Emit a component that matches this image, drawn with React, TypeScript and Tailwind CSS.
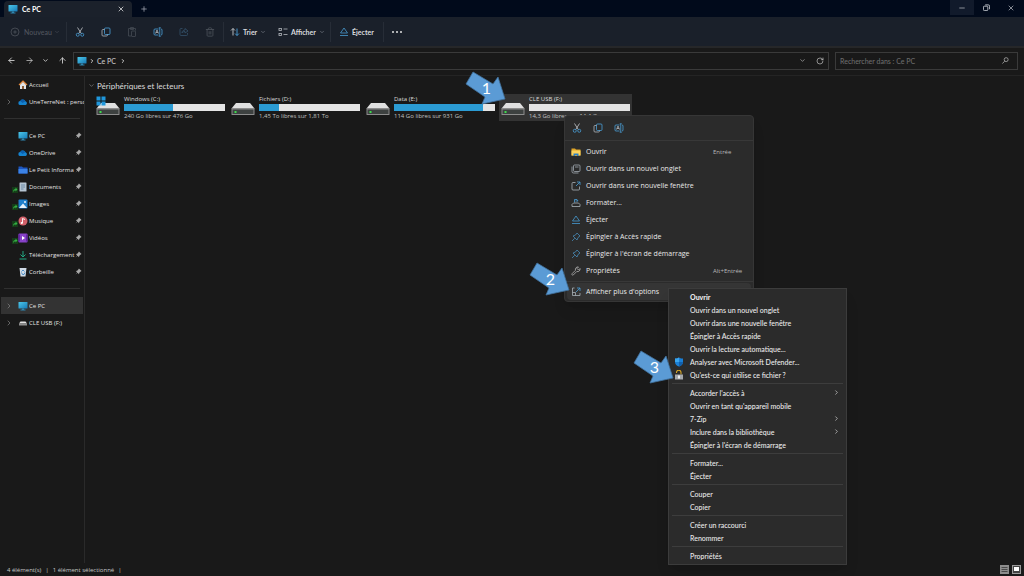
import React from 'react';
import { ArrowLeft, ArrowRight, ArrowUp, ChevronDown, ChevronRight, Minus, Plus, RotateCw, Trash2, X } from 'lucide-react';

interface SideItem {
  label: string;
  icon: React.ReactNode;
  pinned?: boolean;
  expandable?: boolean;
  synced?: boolean;
  active?: boolean;
}

interface Drive {
  name: string;
  info: string;
  used: number;
  system?: boolean;
  selected?: boolean;
}

interface MenuItem {
  label: string;
  icon?: React.ReactNode;
  shortcut?: string;
  bold?: boolean;
  submenu?: boolean;
}

const svg = 'size-[10px] shrink-0';

const PcIcon = () => (
  <svg viewBox="0 0 20 20" className={svg}>
    <defs>
      <linearGradient id="pc" x1="0" y1="0" x2="1" y2="1">
        <stop offset="0" stopColor="#4cc8ea" />
        <stop offset="1" stopColor="#1678b4" />
      </linearGradient>
    </defs>
    <rect x="1" y="2" width="18" height="13" rx="1" fill="url(#pc)" />
    <path d="M8 15h4v2h3v2H5v-2h3z" fill="#2f86b0" />
  </svg>
);

const HomeIcon = () => (
  <svg viewBox="0 0 20 20" className={svg}>
    <path d="M4 9l6-6 6 6v9h-4v-6H8v6H4z" fill="#dfe3e8" />
    <path d="M2 10l8-8 8 8" fill="none" stroke="#e0873c" strokeWidth="2.4" />
    <path d="M8 12h4v6H8z" fill="#8a5a34" />
  </svg>
);

const CloudIcon = () => (
  <svg viewBox="0 0 20 20" className={svg}>
    <path d="M5 16a4 4 0 0 1-.6-8A6 6 0 0 1 15 8.500a4 4 0 0 1 .5 7.500z" fill="#1583d0" />
    <path d="M4.400 8A6 6 0 0 1 15 8.500L9 12z" fill="#0b5fae" />
  </svg>
);

const FolderBlueIcon = () => (
  <svg viewBox="0 0 20 20" className={svg}>
    <path d="M1 3h7l2 2h9v12H1z" fill="#1d56c0" />
    <path d="M1 8h18v9H1z" fill="#3b82e6" />
  </svg>
);

const DocIcon = () => (
  <svg viewBox="0 0 20 20" className={svg}>
    <rect x="3" y="1" width="14" height="18" rx="1" fill="#b5c4d2" />
    <path d="M6 6h8M6 10h8M6 14h5" stroke="#5c7f9c" strokeWidth="1.600" />
  </svg>
);

const ImageIcon = () => (
  <svg viewBox="0 0 20 20" className={svg}>
    <rect x="1" y="1" width="18" height="18" rx="2" fill="#1f7fcb" />
    <path d="M2 18l8-9 8 9z" fill="#e6f1fa" />
    <circle cx="14" cy="6" r="2" fill="#e6f1fa" />
  </svg>
);

const MusicIcon = () => (
  <svg viewBox="0 0 20 20" className={svg}>
    <circle cx="10" cy="10" r="9" fill="#d0616a" />
    <path d="M9 14V5l5 2" fill="none" stroke="#fff" strokeWidth="1.800" />
    <circle cx="7.500" cy="14" r="2.200" fill="#fff" />
  </svg>
);

const VideoIcon = () => (
  <svg viewBox="0 0 20 20" className={svg}>
    <rect x="1" y="1" width="18" height="18" rx="2" fill="#8742c8" />
    <path d="M1 3h3v14H1zM16 3h3v14h-3z" fill="#6127a0" />
    <path d="M8 6l6 4-6 4z" fill="#fff" />
  </svg>
);

const DownloadIcon = () => (
  <svg viewBox="0 0 20 20" className={svg}>
    <path d="M10 2v11M5 9l5 5 5-5M3 18h14" fill="none" stroke="#22a884" strokeWidth="2" />
  </svg>
);

const BinIcon = () => (
  <svg viewBox="0 0 20 20" className={svg}>
    <path d="M3 2h14l-2 17H5z" fill="#cfdbe6" />
    <path d="M7 9l3-3 3 3M7 11l2 4h3l2-4" fill="none" stroke="#2a78bd" strokeWidth="1.600" />
  </svg>
);

const UsbIcon = () => (
  <svg viewBox="0 0 20 20" className={svg}>
    <path d="M5 7h10l3 4H2z" fill="#e2e2e2" />
    <path d="M2 11h16v4H2z" fill="#8e8e8e" />
  </svg>
);

const PinIcon = () => (
  <svg viewBox="0 0 16 16" className="size-[7px] shrink-0">
    <path d="M9 1l6 6-2 1-3 3-1 3-3-3-5 4 4-5-3-3 3-1 3-3z" fill="#a8a8a8" />
  </svg>
);

const ShortcutIcon = () => (
  <svg viewBox="0 0 12 12" className="size-[6px] shrink-0">
    <rect width="12" height="12" fill="#153b18" />
    <path d="M2 11c0-5 2-7 5-7V1l4 4-4 4V6.500C5 6.500 3 8 2 11z" fill="#35b044" />
  </svg>
);

const CutIcon = () => (
  <svg viewBox="0 0 20 20" className={svg} fill="none" strokeWidth="1.600">
    <path d="M5 1l7.500 12M15 1L7.500 13" stroke="#c4c8cc" />
    <circle cx="5.500" cy="15.500" r="3" stroke="#4a9fd8" />
    <circle cx="14.500" cy="15.500" r="3" stroke="#4a9fd8" />
  </svg>
);

const CopyIcon = () => (
  <svg viewBox="0 0 20 20" className={svg} fill="none" strokeWidth="1.600">
    <rect x="7" y="2" width="11" height="13" rx="2" stroke="#4a9fd8" />
    <path d="M7 5H4a2 2 0 0 0-2 2v9a2 2 0 0 0 2 2h7a2 2 0 0 0 2-2v-1" stroke="#aeb4ba" />
  </svg>
);

const PasteIcon = () => (
  <svg viewBox="0 0 20 20" className={svg} fill="none" stroke="#454b54" strokeWidth="1.600">
    <path d="M8 18H3V3h14v4M7 1h6v4H7z" />
    <rect x="9" y="8" width="8" height="11" rx="1" />
  </svg>
);

const RenameIcon = () => (
  <svg viewBox="0 0 20 20" className={svg} fill="none" strokeWidth="1.600">
    <path d="M11 4H4a2 2 0 0 0-2 2v8a2 2 0 0 0 2 2h7M16 4a2 2 0 0 1 2 2v8a2 2 0 0 1-2 2" stroke="#4a9fd8" />
    <path d="M5 13l3-7 3 7M6 11h4" stroke="#aeb4ba" />
    <path d="M13.500 2v16M11.500 1.500h4M11.500 18.500h4" stroke="#4a9fd8" />
  </svg>
);

const ShareIcon = () => (
  <svg viewBox="0 0 20 20" className={svg} fill="none" stroke="#34506a" strokeWidth="1.600">
    <path d="M7 3H4a2 2 0 0 0-2 2v10a2 2 0 0 0 2 2h11a2 2 0 0 0 2-2v-3M6 12c0-4 3-6 6-6V3l6 5-6 4V9c-3 0-5 1-6 3z" />
  </svg>
);

const NewIcon = () => (
  <svg viewBox="0 0 20 20" className={svg} fill="none" stroke="#50555e" strokeWidth="1.500">
    <circle cx="10" cy="10" r="8" />
    <path d="M10 6.500v7M6.500 10h7" />
  </svg>
);

const SortIcon = () => (
  <svg viewBox="0 0 20 20" className={svg} fill="none" strokeWidth="1.800">
    <path d="M6 17V3M2 7l4-4 4 4" stroke="#c4c8cc" />
    <path d="M14 3v14M10 13l4 4 4-4" stroke="#4a9fd8" />
  </svg>
);

const ViewIcon = () => (
  <svg viewBox="0 0 20 20" className={svg} fill="none" stroke="#b4b8be" strokeWidth="1.600">
    <rect x="2" y="3" width="5" height="4" />
    <rect x="2" y="13" width="5" height="4" />
    <path d="M11 4h8M11 15h8" />
  </svg>
);

const EjectIcon = () => (
  <svg viewBox="0 0 20 20" className={svg} fill="none" stroke="#4593c8" strokeWidth="1.700" strokeLinejoin="round">
    <path d="M10 2l7 10H3zM2 17h16" />
  </svg>
);

const ExplorerIcon = () => (
  <svg viewBox="0 0 20 20" className={svg}>
    <path d="M1 3h7l2 2h9v12H1z" fill="#e0a528" />
    <path d="M1 7h18v10H1z" fill="#fbd25c" />
    <path d="M5 18v-5h10v5h-3v-2H8v2z" fill="#2b7fc4" />
  </svg>
);

const NewTabIcon = () => (
  <svg viewBox="0 0 20 20" className={svg} fill="none" stroke="#a9b2b9" strokeWidth="1.500">
    <rect x="5" y="2" width="13" height="13" rx="2" />
    <path d="M2 5v10a3 3 0 0 0 3 3h10M8 6h7" />
  </svg>
);

const NewWindowIcon = () => (
  <svg viewBox="0 0 20 20" className={svg} fill="none" strokeWidth="1.600">
    <path d="M9 3H4a2 2 0 0 0-2 2v11a2 2 0 0 0 2 2h11a2 2 0 0 0 2-2v-5" stroke="#a9b2b9" />
    <path d="M10 10l8-8M12 2h6v6" stroke="#4a9fd8" />
  </svg>
);

const FormatIcon = () => (
  <svg viewBox="0 0 20 20" className={svg} fill="none" strokeWidth="1.600">
    <path d="M7 9V3h5l2 3H9" stroke="#4a9fd8" />
    <path d="M5 10h10l3 3v4H2v-4z" stroke="#a9b2b9" />
  </svg>
);

const PinOutlineIcon = () => (
  <svg viewBox="0 0 20 20" className={svg} fill="none" stroke="#4a8fbd" strokeWidth="1.500" strokeLinejoin="round">
    <path d="M12 2l6 6-4 3-2 5-8-8 5-2zM7.500 12.500L2 18" />
  </svg>
);

const WrenchIcon = () => (
  <svg viewBox="0 0 20 20" className={svg} fill="none" stroke="#b8b8b8" strokeWidth="1.500" strokeLinejoin="round">
    <path d="M15 2a5 5 0 0 0-6 6.500l-7 7a1.800 1.800 0 0 0 2.500 2.500l7-7A5 5 0 0 0 18 5l-3 3-3-3z" />
  </svg>
);

const MoreOptionsIcon = () => (
  <svg viewBox="0 0 20 20" className={svg} fill="none" strokeWidth="1.600">
    <path d="M7 2H3v15h15v-5M3 11h6v6" stroke="#a9b2b9" />
    <path d="M10 10l8-8M12 2h6v6" stroke="#4a9fd8" />
  </svg>
);

const ShieldIcon = () => (
  <svg viewBox="0 0 20 20" className={svg}>
    <path d="M10 1c3 2 5 2 8 2v7c0 5-4 8-8 9-4-1-8-4-8-9V3c3 0 5 0 8-2z" fill="#1a7fd6" />
    <path d="M10 10h8c0 5-4 8-8 9z" fill="#1260ac" />
    <path d="M10 1v9H2V3c3 0 5 0 8-2z" fill="#3aa5ee" />
  </svg>
);

const LockIcon = () => (
  <svg viewBox="0 0 20 20" className={svg}>
    <path d="M5 6V5a4.500 4.500 0 0 1 9 0v4" fill="none" stroke="#d8a828" strokeWidth="2.200" />
    <rect x="2" y="9" width="16" height="10" fill="#a5a8ab" />
    <path d="M8 11h4v6H8z" fill="#eeeeee" />
  </svg>
);

const SearchIcon = () => (
  <svg viewBox="0 0 16 16" className="size-[7px]" fill="none" stroke="#a0a0a0" strokeWidth="2">
    <circle cx="9.500" cy="6" r="4.500" />
    <path d="M6 9.500L1 15" />
  </svg>
);

const DriveIcon = ({ system }: { system?: boolean }) => (
  <svg viewBox="0 0 48 40" className="h-[20px] w-[24px] shrink-0">
    <path d="M10 14h28l9 11H1z" fill="#e0e0e0" />
    <rect x="1" y="24" width="46" height="14" rx="1" fill="#8c8c8c" />
    <rect x="3" y="27" width="42" height="9" fill="#3d4140" />
    <rect x="7" y="30" width="4" height="4" fill="#3ddc4d" />
    {system && <path d="M1 1h8v8H1zM11 1h8v8h-8zM1 11h8v8H1zM11 11h8v8h-8z" fill="#1f97dc" />}
  </svg>
);

const sideGroups: SideItem[][] = [
  [
    { label: 'Accueil', icon: <HomeIcon /> },
    { label: 'UneTerreNet : perso', icon: <CloudIcon />, expandable: true },
  ],
  [
    { label: 'Ce PC', icon: <PcIcon />, pinned: true },
    { label: 'OneDrive', icon: <CloudIcon />, pinned: true },
    { label: 'Le Petit Informa', icon: <FolderBlueIcon />, pinned: true },
    { label: 'Documents', icon: <DocIcon />, pinned: true, synced: true },
    { label: 'Images', icon: <ImageIcon />, pinned: true, synced: true },
    { label: 'Musique', icon: <MusicIcon />, pinned: true, synced: true },
    { label: 'Vidéos', icon: <VideoIcon />, pinned: true, synced: true },
    { label: 'Téléchargement', icon: <DownloadIcon />, pinned: true },
    { label: 'Corbeille', icon: <BinIcon />, pinned: true },
  ],
  [
    { label: 'Ce PC', icon: <PcIcon />, expandable: true, active: true },
    { label: 'CLE USB (F:)', icon: <UsbIcon />, expandable: true },
  ],
];

const drives: Drive[] = [
  { name: 'Windows (C:)', info: '240 Go libres sur 476 Go', used: 49, system: true },
  { name: 'Fichiers (D:)', info: '1,45 To libres sur 1,81 To', used: 20 },
  { name: 'Data (E:)', info: '114 Go libres sur 931 Go', used: 88 },
  { name: 'CLE USB (F:)', info: '14,3 Go libres sur 14,4 Go', used: 0, selected: true },
];

const menuItems: MenuItem[] = [
  { label: 'Ouvrir', icon: <ExplorerIcon />, shortcut: 'Entrée' },
  { label: 'Ouvrir dans un nouvel onglet', icon: <NewTabIcon /> },
  { label: 'Ouvrir dans une nouvelle fenêtre', icon: <NewWindowIcon /> },
  { label: 'Formater...', icon: <FormatIcon /> },
  { label: 'Éjecter', icon: <EjectIcon /> },
  { label: 'Épingler à Accès rapide', icon: <PinOutlineIcon /> },
  { label: "Épingler à l'écran de démarrage", icon: <PinOutlineIcon /> },
  { label: 'Propriétés', icon: <WrenchIcon />, shortcut: 'Alt+Entrée' },
];

const classicGroups: MenuItem[][] = [
  [
    { label: 'Ouvrir', bold: true },
    { label: 'Ouvrir dans un nouvel onglet' },
    { label: 'Ouvrir dans une nouvelle fenêtre' },
    { label: 'Épingler à Accès rapide' },
    { label: 'Ouvrir la lecture automatique...' },
    { label: 'Analyser avec Microsoft Defender...', icon: <ShieldIcon /> },
    { label: "Qu'est-ce qui utilise ce fichier ?", icon: <LockIcon /> },
  ],
  [
    { label: "Accorder l'accès à", submenu: true },
    { label: "Ouvrir en tant qu'appareil mobile" },
    { label: '7-Zip', submenu: true },
    { label: 'Inclure dans la bibliothèque', submenu: true },
    { label: "Épingler à l'écran de démarrage" },
  ],
  [{ label: 'Formater...' }, { label: 'Éjecter' }],
  [{ label: 'Couper' }, { label: 'Copier' }],
  [{ label: 'Créer un raccourci' }, { label: 'Renommer' }],
  [{ label: 'Propriétés' }],
];

function TitleBar() {
  return (
    <header className="flex h-[17px] items-stretch bg-[#010a1b] pl-1">
      <div className="mt-px flex w-32 items-center rounded-t bg-[#1b212b] pr-[7px] pl-1 font-bold text-white">
        <PcIcon />
        <span className="ml-1 flex-1">Ce PC</span>
        <button aria-label="Fermer l'onglet"><X size={8} /></button>
      </div>
      <button aria-label="Nouvel onglet" className="ml-1 px-1 text-[#b8bcc4]"><Plus size={8} /></button>
      <div className="ml-auto flex text-[#c8ccd2]">
        <button aria-label="Réduire" className="mb-0.5 flex w-6 items-center justify-center bg-[#111a2b]"><Minus size={8} /></button>
        <button aria-label="Restaurer" className="mb-0.5 flex w-6 items-center justify-center">
          <svg viewBox="0 0 16 16" className="size-[7px]" fill="none" stroke="currentColor" strokeWidth="2">
            <rect x="1" y="5" width="10" height="10" rx="2" />
            <path d="M5 2h7a3 3 0 0 1 3 3v7" />
          </svg>
        </button>
        <button aria-label="Fermer" className="mb-0.5 flex w-[26px] items-center justify-center"><X size={8} /></button>
      </div>
    </header>
  );
}

const Separator = () => <div className="h-5 w-px shrink-0 bg-[#272d37]" />;

function Toolbar() {
  const tool = 'flex w-[26px] items-center justify-center';
  return (
    <div className="flex h-[31px] items-center border-b-2 border-[#262729] bg-[#1a202a] font-bold text-[#d8dade]">
      <button className="flex w-[66px] items-center pl-[10px] font-medium text-[#50555e]" disabled>
        <NewIcon />
        <span className="mr-[2px] ml-1">Nouveau</span>
        <ChevronDown size={6} />
      </button>
      <Separator />
      <button aria-label="Couper" className={tool}><CutIcon /></button>
      <button aria-label="Copier" className={tool}><CopyIcon /></button>
      <button aria-label="Coller" className={tool} disabled><PasteIcon /></button>
      <button aria-label="Renommer" className={tool}><RenameIcon /></button>
      <button aria-label="Partager" className={tool} disabled><ShareIcon /></button>
      <button aria-label="Supprimer" className={tool} disabled><Trash2 size={10} color="#4a5059" /></button>
      <Separator />
      <button className="flex w-12 items-center gap-[3px] pl-1.5">
        <SortIcon />
        Trier
        <ChevronDown size={6} color="#9297a0" />
      </button>
      <button className="flex w-[58px] items-center gap-[3px] pl-1.5">
        <ViewIcon />
        Afficher
        <ChevronDown size={6} color="#9297a0" />
      </button>
      <Separator />
      <button className="flex w-[52px] items-center gap-[3px] pl-2">
        <EjectIcon />
        Éjecter
      </button>
      <Separator />
      <button aria-label="Voir plus" className={tool}>
        <svg viewBox="0 0 20 4" className="h-[2px] w-[10px]" fill="#e0e0e0">
          <circle cx="2" cy="2" r="2" />
          <circle cx="10" cy="2" r="2" />
          <circle cx="18" cy="2" r="2" />
        </svg>
      </button>
    </div>
  );
}

function AddressRow() {
  return (
    <div className="flex h-7 items-center gap-1.5 border-b border-[#242424] pr-1.5 pb-0.5 text-[#c8c8c8]">
      <nav className="flex w-[67px] items-center justify-between pl-[7px]">
        <button aria-label="Précédent"><ArrowLeft size={9} strokeWidth={2.5} /></button>
        <button aria-label="Suivant"><ArrowRight size={9} /></button>
        <button aria-label="Récents"><ChevronDown size={7} strokeWidth={3} /></button>
        <button aria-label="Dossier parent"><ArrowUp size={9} strokeWidth={2.5} /></button>
      </nav>
      <div className="flex h-[18px] flex-1 items-center gap-[2px] border border-[#3a3a3a] pr-1 pl-[3px]">
        <PcIcon />
        <ChevronRight size={6} strokeWidth={4} />
        <a href="#ce-pc" className="mr-[2px]">Ce PC</a>
        <ChevronRight size={6} strokeWidth={4} />
        <button aria-label="Adresses récentes" className="ml-auto"><ChevronDown size={7} /></button>
        <button aria-label="Actualiser" className="ml-2"><RotateCw size={8} /></button>
      </div>
      <label className="flex h-[18px] w-[183px] items-center border border-[#3a3a3a] px-1">
        <input
          type="text"
          aria-label="Rechercher"
          placeholder="Rechercher dans : Ce PC"
          className="min-w-0 flex-1 bg-transparent outline-none placeholder:text-[#6c6c6c]"
        />
        <span className="pr-1"><SearchIcon /></span>
      </label>
    </div>
  );
}

function Sidebar() {
  return (
    <aside className="w-[85px] shrink-0 border-r border-[#2a2a2a] font-['Open_Sans','Noto_Sans',sans-serif] text-[6px] text-[#e2e2e2]">
      {sideGroups.map((group, i) => (
        <div key={i}>
          {i > 0 && <div className="mx-1 flex h-[17px] items-center"><hr className="w-full border-[#303030]" /></div>}
          {group.map((item) => (
            <a
              key={item.label}
              href="#dossier"
              className={`ml-px flex h-[17px] items-center whitespace-nowrap ${item.active ? 'mr-px bg-[#333333]' : ''}`}
            >
              <span className="flex h-full w-[17px] shrink-0 items-center pl-1 text-[#8a8a8a]">
                {item.expandable && <ChevronRight size={8} />}
                {item.synced && <span className="ml-auto self-end pb-0.5"><ShortcutIcon /></span>}
              </span>
              {item.icon}
              <span className="ml-px min-w-0 flex-1 overflow-hidden">{item.label}</span>
              {item.pinned && <span className="pr-[2px]"><PinIcon /></span>}
            </a>
          ))}
        </div>
      ))}
    </aside>
  );
}

function DriveTile({ drive }: { drive: Drive }) {
  return (
    <div className={`flex h-[27px] w-[133px] px-[2px] ${drive.selected ? 'bg-[#333333]' : ''}`}>
      <div className="mt-[2px] mr-1"><DriveIcon system={drive.system} /></div>
      <div className="w-[101px] font-['Open_Sans','Noto_Sans',sans-serif] text-[6px] whitespace-nowrap">
        <div className="h-[10px]">{drive.name}</div>
        <div className="h-[7px] bg-[#e4e4e4]">
          <div className="h-full bg-[#2b9bd3]" style={{ width: `${drive.used}%` }} />
        </div>
        <div className="h-[10px] text-[#c0c0c0]">{drive.info}</div>
      </div>
    </div>
  );
}

function ContextMenu() {
  return (
    <div role="menu" className="absolute top-[115px] left-[564px] w-[190px] rounded border border-[#363636] bg-[#2b2b2b] font-['Open_Sans','Noto_Sans',sans-serif] text-[#e8e8e8] shadow-lg">
      <div className="flex h-[25px] items-center gap-[11px] border-b border-[#383838] pl-[7px]">
        <button aria-label="Couper"><CutIcon /></button>
        <button aria-label="Copier"><CopyIcon /></button>
        <button aria-label="Renommer"><RenameIcon /></button>
      </div>
      <div className="py-[2px]">
        {menuItems.map((item) => (
          <button key={item.label} role="menuitem" className="flex h-[17px] w-full items-center pl-1.5 text-left">
            {item.icon}
            <span className="ml-[5px] flex-1">{item.label}</span>
            {item.shortcut && <span className="w-10 text-[6px] text-[#b8b8b8]">{item.shortcut}</span>}
          </button>
        ))}
      </div>
      <div className="border-t border-[#383838] px-[2px] py-px">
        <button role="menuitem" className="flex h-[17px] w-full items-center rounded-sm bg-[#353535] pl-1">
          <MoreOptionsIcon />
          <span className="ml-[5px]">Afficher plus d'options</span>
        </button>
      </div>
    </div>
  );
}

function ClassicMenu() {
  return (
    <div role="menu" className="absolute top-[288px] left-[668px] w-[179px] border border-[#3c3c3c] bg-[#2b2b2b] px-[3px] pt-px pb-[2px] text-[#ececec] shadow-lg">
      {classicGroups.map((group, i) => (
        <div key={i}>
          {i > 0 && <hr className="my-[2px] border-[#3d3d3d]" />}
          {group.map((item) => (
            <button key={item.label} role="menuitem" className="flex h-[13px] w-full items-center pr-[3px] pl-[2px] text-left">
              <span className="w-4">{item.icon}</span>
              <span className={`flex-1 ${item.bold ? 'font-black' : ''}`}>{item.label}</span>
              {item.submenu && <ChevronRight size={7} />}
            </button>
          ))}
        </div>
      ))}
    </div>
  );
}

function StepArrow({ step, className }: { step: number; className: string }) {
  return (
    <div className={`absolute h-9 w-[41px] ${className}`}>
      <svg viewBox="0 0 41 36" className="absolute inset-0">
        <path d="M8 2L1 14l19 13-3 7 23-5L33 7l-5 7z" fill="#5b9bd5" stroke="#41719c" strokeWidth="0.800" />
      </svg>
      <span className="relative block pl-[2px] text-center text-[16px] leading-9 font-normal text-white">{step}</span>
    </div>
  );
}

export default function App() {
  return (
    <div className="relative flex min-h-screen flex-col overflow-hidden bg-[#191919] font-['Lato','Open_Sans',sans-serif] text-[7px] leading-[10px] font-medium text-[#dcdcdc]">
      <TitleBar />
      <Toolbar />
      <AddressRow />
      <div className="flex flex-1">
        <Sidebar />
        <main className="flex-1 pt-[2px] pl-[3px]">
          <h2 className="mb-px flex h-[15px] items-center gap-[2px] text-[8px] font-normal">
            <ChevronDown size={7} color="#909090" />
            Périphériques et lecteurs
          </h2>
          <div className="flex flex-wrap gap-[2px] pl-1.5">
            {drives.map((drive) => <DriveTile key={drive.name} drive={drive} />)}
          </div>
        </main>
      </div>
      <footer className="flex h-[13px] items-center gap-1 pr-[3px] pl-[7px] font-['Open_Sans','Noto_Sans',sans-serif] text-[6px] text-[#c8c8c8]">
        <span>4 élément(s)</span>
        <span>|</span>
        <span>1 élément sélectionné</span>
        <span>|</span>
        <button aria-label="Détails" className="ml-auto">
          <svg viewBox="0 0 18 18" className="size-[9px]">
            <rect width="18" height="18" fill="#8c8c8c" />
            <path d="M3 5h12M3 9h12M3 13h12" stroke="#333" strokeWidth="1.500" />
          </svg>
        </button>
        <button aria-label="Grandes icônes" className="-ml-px">
          <svg viewBox="0 0 18 18" className="size-[9px]">
            <rect width="18" height="18" fill="#9a9a9a" />
            <rect x="2" y="2" width="14" height="14" fill="#444" />
            <rect x="4" y="4" width="10" height="8" fill="#fff" />
          </svg>
        </button>
      </footer>
      <ContextMenu />
      <ClassicMenu />
      <StepArrow step={1} className="top-[70px] left-[465px]" />
      <StepArrow step={2} className="top-[261px] left-[529px]" />
      <StepArrow step={3} className="top-[349px] left-[633px]" />
    </div>
  );
}
